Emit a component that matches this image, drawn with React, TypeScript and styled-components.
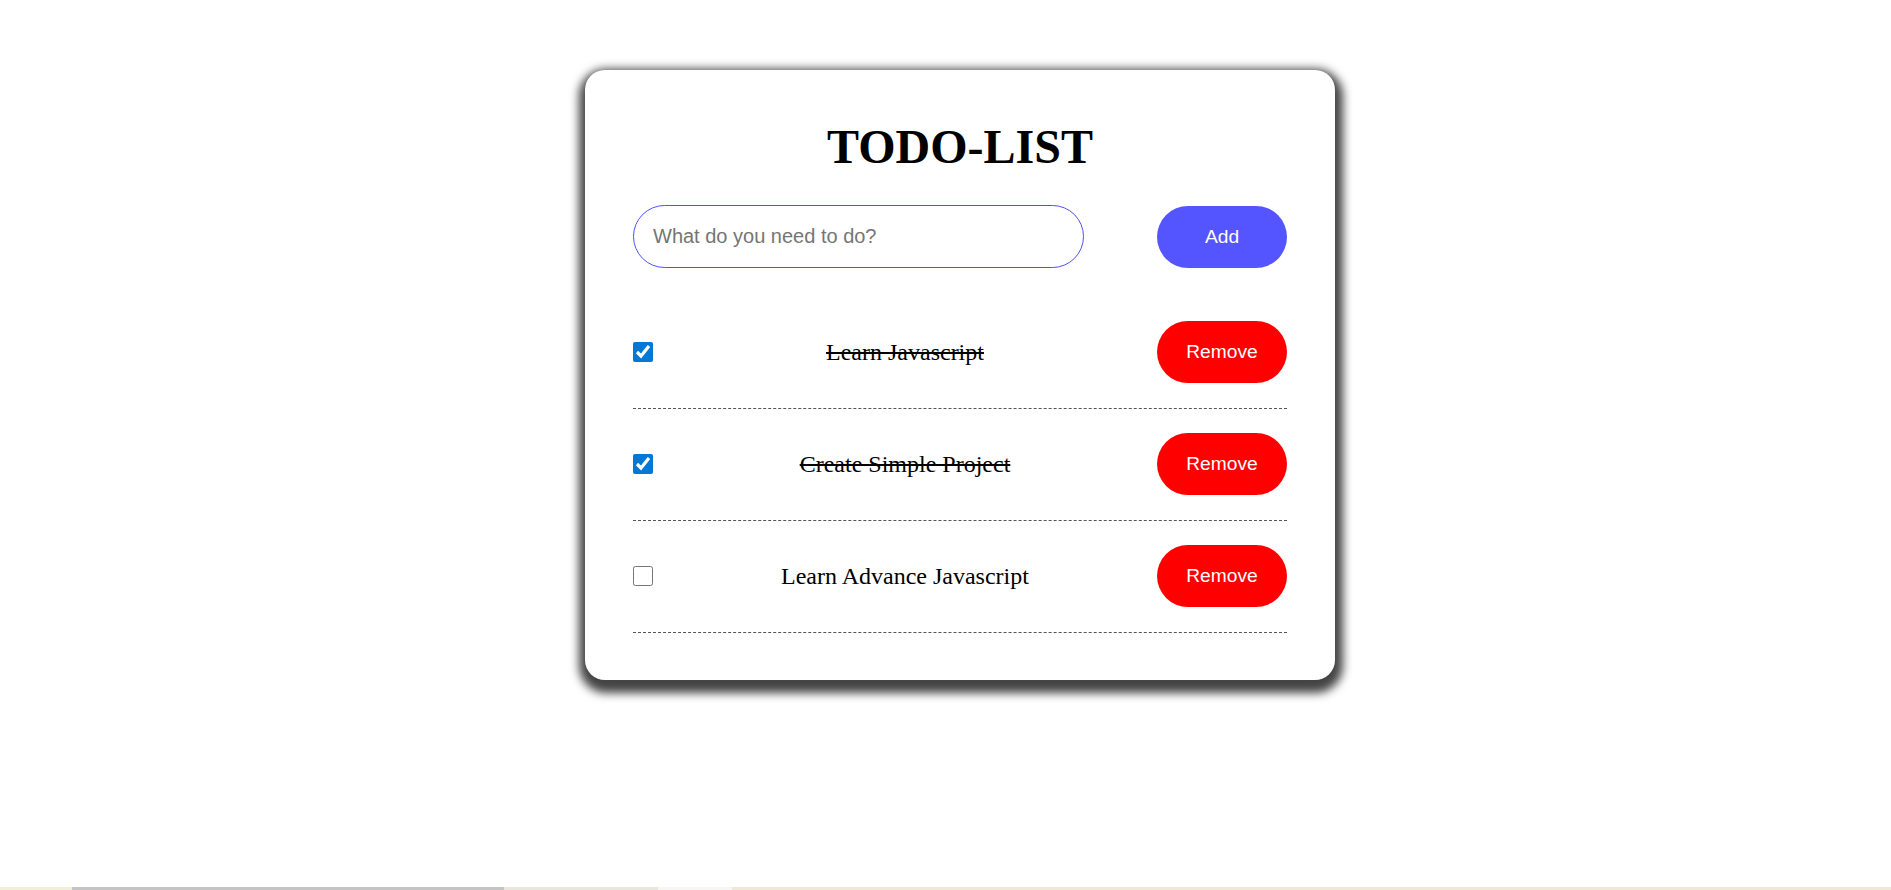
import React, { useState } from "react";
import styled, { createGlobalStyle } from "styled-components";

const GlobalStyle = createGlobalStyle`
  html, body {
    margin: 0;
    padding: 0;
    background: #ffffff;
  }
  body {
    font-family: "Liberation Serif", "Times New Roman", serif;
    color: #000;
  }
  *, *::before, *::after {
    box-sizing: border-box;
  }
`;

const Page = styled.div`
  min-height: 100vh;
  display: flex;
  flex-direction: column;
  align-items: stretch;
`;

const Stage = styled.main`
  display: flex;
  padding: 70px 0 0 585px;
`;

const Card = styled.section`
  width: 750px;
  padding: 51px 48px 47px;
  background: #ffffff;
  border-radius: 20px;
  box-shadow: 1px 6px 10px 7px #444444;
`;

const Title = styled.h1`
  margin: 0 0 32px;
  font-family: "Liberation Serif", "Times New Roman", serif;
  font-weight: 700;
  font-size: 48px;
  line-height: 52px;
  text-align: center;
`;

const Form = styled.form`
  display: flex;
  align-items: center;
  justify-content: space-between;
  margin: 0 0 29px;
`;

const TextInput = styled.input`
  width: 451px;
  height: 63px;
  padding: 0 19px;
  border: 1px solid #4f4fff;
  border-radius: 32px;
  outline: none;
  font-family: "Liberation Sans", Arial, sans-serif;
  font-size: 20px;
  color: #000;
  &::placeholder {
    color: #757575;
  }
`;

const PillButton = styled.button<{ $tone: string }>`
  width: 130px;
  height: 62px;
  border: none;
  border-radius: 31px;
  background: ${(p) => p.$tone};
  color: #ffffff;
  font-family: "Liberation Sans", Arial, sans-serif;
  font-size: 19.2px;
  cursor: pointer;
  flex: none;
`;

const List = styled.ul`
  list-style: none;
  margin: 0;
  padding: 0;
`;

const Row = styled.li`
  display: flex;
  align-items: center;
  padding: 24px 0 25px;
  border-bottom: 1px dashed #555555;
`;

const Check = styled.input`
  width: 20px;
  height: 20px;
  margin: 0;
  flex: none;
  accent-color: #0078d7;
  cursor: pointer;
`;

const Label = styled.span<{ $done: boolean }>`
  flex: 1;
  text-align: center;
  font-family: "Liberation Serif", "Times New Roman", serif;
  font-size: 24px;
  text-decoration: ${(p) => (p.$done ? "line-through" : "none")};
`;

const Strip = styled.div`
  margin-top: auto;
  display: flex;
  height: 3px;
`;

const Segment = styled.div<{ $w: number; $c: string }>`
  width: ${(p) => p.$w}px;
  flex: ${(p) => (p.$w === 0 ? "1" : "none")};
  background: ${(p) => p.$c};
`;

type Todo = { id: number; text: string; done: boolean };

const initial: Todo[] = [
  { id: 1, text: "Learn Javascript", done: true },
  { id: 2, text: "Create Simple Project", done: true },
  { id: 3, text: "Learn Advance Javascript", done: false },
];

export default function App() {
  const [todos, setTodos] = useState<Todo[]>(initial);
  const [value, setValue] = useState("");

  const add = (e: React.FormEvent) => {
    e.preventDefault();
    const text = value.trim();
    if (!text) return;
    setTodos((t) => [...t, { id: Date.now(), text, done: false }]);
    setValue("");
  };

  const toggle = (id: number) =>
    setTodos((t) => t.map((x) => (x.id === id ? { ...x, done: !x.done } : x)));

  const remove = (id: number) => setTodos((t) => t.filter((x) => x.id !== id));

  return (
    <>
      <GlobalStyle />
      <Page>
        <Stage>
          <Card>
            <Title>TODO-LIST</Title>
            <Form onSubmit={add}>
              <TextInput
                type="text"
                placeholder="What do you need to do?"
                value={value}
                onChange={(e) => setValue(e.target.value)}
              />
              <PillButton type="submit" $tone="#5555ff">
                Add
              </PillButton>
            </Form>
            <List>
              {todos.map((t) => (
                <Row key={t.id}>
                  <Check type="checkbox" checked={t.done} onChange={() => toggle(t.id)} />
                  <Label $done={t.done}>{t.text}</Label>
                  <PillButton type="button" $tone="#ff0000" onClick={() => remove(t.id)}>
                    Remove
                  </PillButton>
                </Row>
              ))}
            </List>
          </Card>
        </Stage>
        <Strip>
          <Segment $w={72} $c="#f2efd9" />
          <Segment $w={432} $c="#c4c4c4" />
          <Segment $w={154} $c="#e9e6da" />
          <Segment $w={74} $c="#f8f6f2" />
          <Segment $w={0} $c="#efe8d6" />
        </Strip>
      </Page>
    </>
  );
}
